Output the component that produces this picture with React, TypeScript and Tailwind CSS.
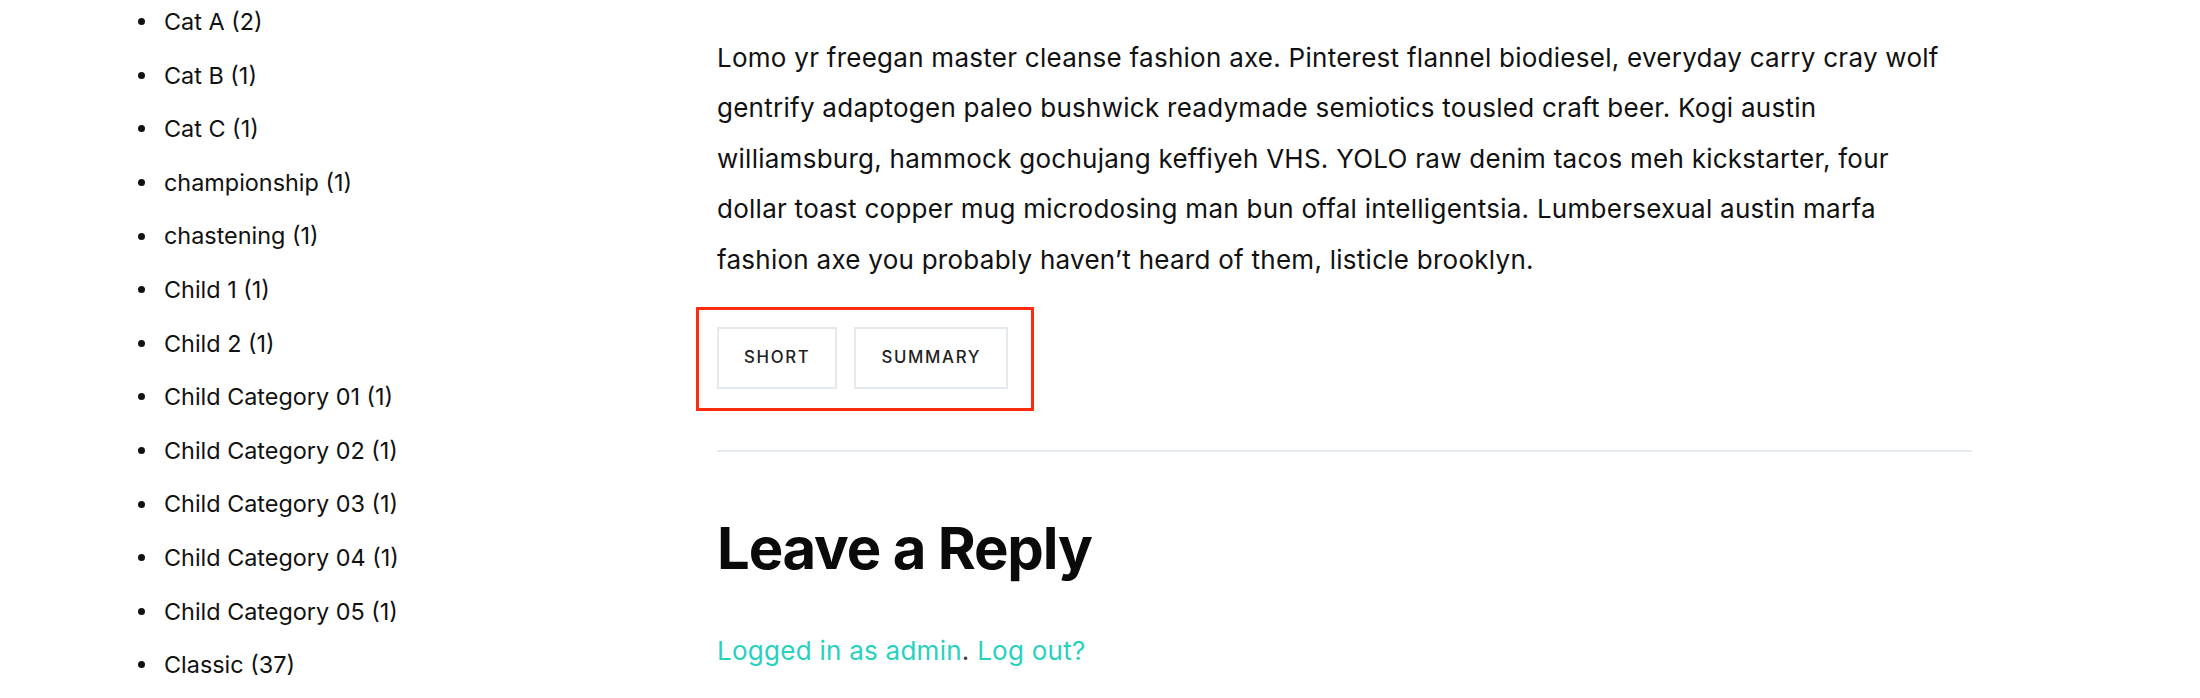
const categories = [
	"Cat A (2)",
	"Cat B (1)",
	"Cat C (1)",
	"championship (1)",
	"chastening (1)",
	"Child 1 (1)",
	"Child 2 (1)",
	"Child Category 01 (1)",
	"Child Category 02 (1)",
	"Child Category 03 (1)",
	"Child Category 04 (1)",
	"Child Category 05 (1)",
	"Classic (37)",
]

const tags = ["Short", "Summary"]

export default function App() {
	return (
		<div className="flex h-[698px] w-[2200px] overflow-hidden bg-white font-['Inter',sans-serif] text-[#111]">
			{/* Sidebar: category list */}
			<aside className="w-[717px] shrink-0">
				<ul className="mt-[-5px]">
					{categories.map((cat) => (
						<li
							key={cat}
							className="flex items-center text-[23.4px] leading-[53.6px]"
						>
							<span className="ml-[138px] mr-[19px] h-[7px] w-[7px] rounded-full bg-[#111]" />
							<a href="#">{cat}</a>
						</li>
					))}
				</ul>
			</aside>

			{/* Post content */}
			<main className="flex w-[1255px] shrink-0 flex-col">
				<p className="mt-[33px] max-w-[1240px] text-[26px] leading-[50.4px] tracking-[0.01em] text-[#111]">
					Lomo yr freegan master cleanse fashion axe. Pinterest flannel
					biodiesel, everyday carry cray wolf gentrify adaptogen paleo bushwick
					readymade semiotics tousled craft beer. Kogi austin williamsburg,
					hammock gochujang keffiyeh VHS. YOLO raw denim tacos meh kickstarter,
					four dollar toast copper mug microdosing man bun offal
					intelligentsia. Lumbersexual austin marfa fashion axe you probably
					haven’t heard of them, listicle brooklyn.
				</p>

				{/* Tags, highlighted */}
				<div className="ml-[-21px] mt-[22px] flex w-fit gap-[17px] border-[3px] border-[#ff2b0f] pb-[19px] pl-[18px] pr-[23px] pt-[17px]">
					{tags.map((tag) => (
						<a
							key={tag}
							href="#"
							className="flex h-[62px] items-center border-2 border-[#e4e9ef] px-[25px] text-[16.8px] font-medium uppercase tracking-[0.1em] text-[#222]"
						>
							{tag}
						</a>
					))}
				</div>

				<div className="mt-[39px] h-[2px] bg-[#e6ebf1]" />

				{/* Comments */}
				<h2 className="mt-[62px] text-[58px] font-bold leading-[1.2] tracking-[-0.02em] text-[#0a0a0a]">
					Leave a Reply
				</h2>
				<p className="mt-[42px] text-[26px] leading-[50.4px] tracking-[0.01em] text-[#444]">
					<a href="#" className="text-[#27d1bf]">
						Logged in as admin
					</a>
					.{" "}
					<a href="#" className="text-[#27d1bf]">
						Log out?
					</a>
				</p>
			</main>
		</div>
	)
}
